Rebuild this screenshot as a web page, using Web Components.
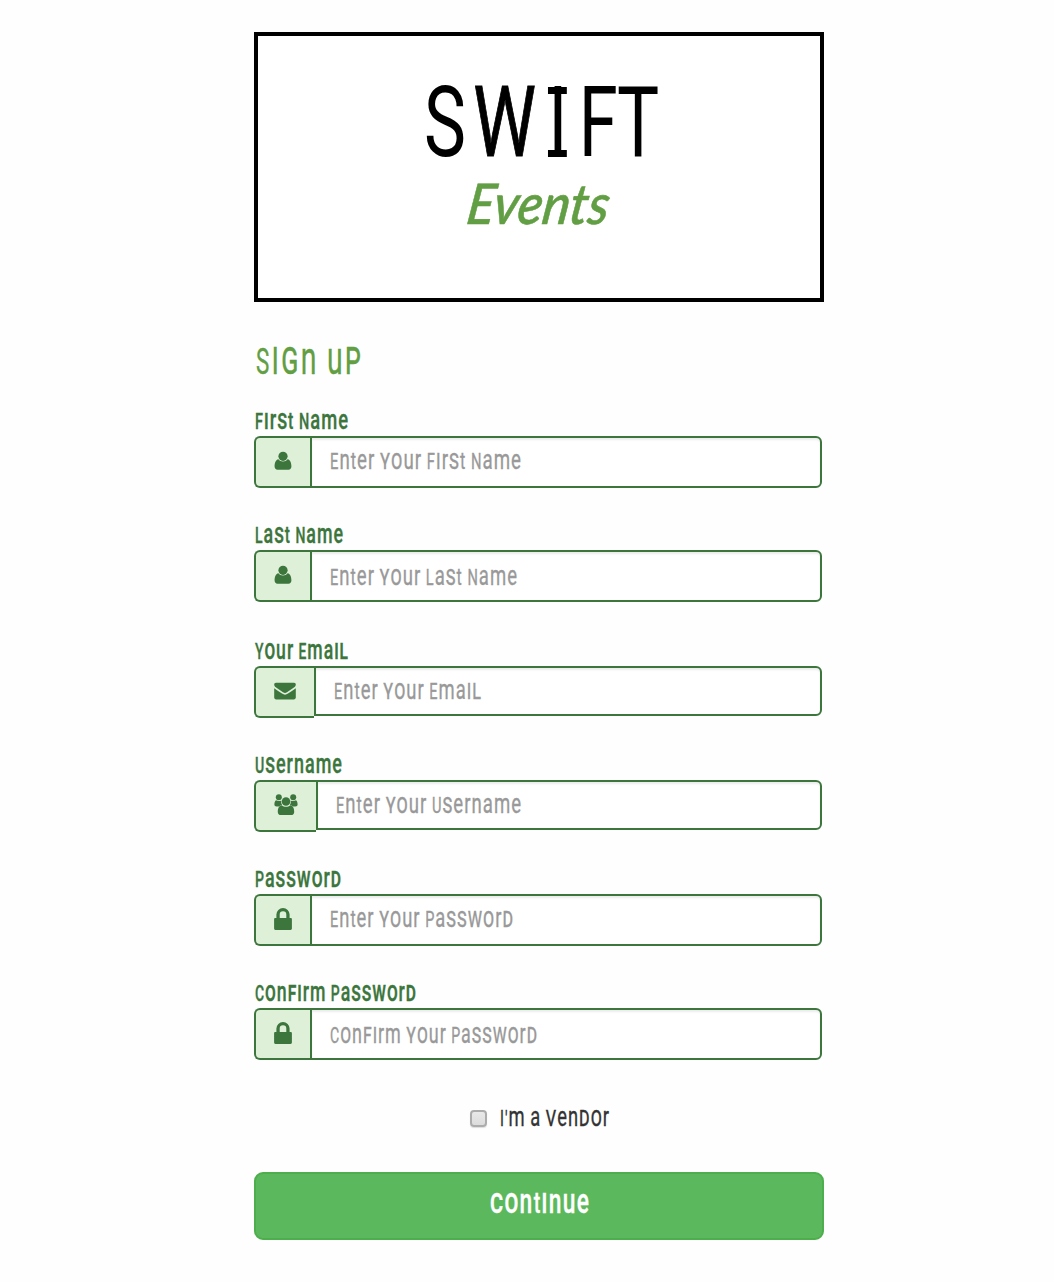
<!DOCTYPE html>
<html lang="en"><head><meta charset="utf-8"><title>Swift Events</title>
<style>
body{margin:0;background:#fefefe;font-family:Roboto,"Liberation Sans",sans-serif}
</style></head><body>
<signup-page></signup-page>
<script>
const define=(name,html,setup)=>customElements.define(name,class extends HTMLElement{
  connectedCallback(){
    if(this.shadowRoot)return;
    this.attachShadow({mode:'open'}).innerHTML=html(this);
    if(setup)setup(this,this.shadowRoot);
  }
});

// Condensed line of text, sized to the width in the "w" attribute.
// With "unicase", small letters are drawn at the height of the capitals.
define('fit-text',()=>`<style>
:host{display:inline-block;white-space:nowrap;text-align:left}
:host([unicase]) .t{-webkit-text-stroke:.35px currentColor}
.t{display:inline-block;transform-origin:0 50%}
.x{font-size:1.27em;line-height:0;font-weight:var(--small-weight,400)}
.c{font-size:1.3em;line-height:0;font-variant-caps:small-caps;font-weight:var(--small-weight,400)}
.k{font-size:1.1em;line-height:0}
</style><span class="t"></span>`,(el,root)=>{
  const s=root.querySelector('span');
  const text=el.getAttribute('text');
  if(el.hasAttribute('unicase'))
    s.innerHTML=text.replace(/([aemnru]+)|([bcdfgiklopsvwyz]+)|(t)/g,(m,x,c)=>`<span class="${x?'x':c?'c':'k'}">${m}</span>`);
  else s.textContent=text;
  const w=+el.getAttribute('w');
  const ls=parseFloat(getComputedStyle(s).letterSpacing)||0;
  const n=s.getBoundingClientRect().width-ls;
  el.style.width=w+'px';
  s.style.transform=`scaleX(${w/n})${el.hasAttribute('slant')?' skewX(-9deg)':''}`;
});

// Wordmark with a slab-serif I.
define('word-mark',()=>`<style>
:host{display:block;width:236px;height:98px;margin-left:5px;font-size:97.500px;line-height:99px;letter-spacing:4px;color:#000;white-space:nowrap}
.t{display:inline-block;transform-origin:0 50%;transform:scaleX(.725)}
.w{margin-left:6px;-webkit-text-stroke:1px #000}
.i{display:inline-block;height:98px;width:26px;letter-spacing:0;margin:0 16px 0 13px;
 background:linear-gradient(#000,#000) 0 13px/100% 7px no-repeat,linear-gradient(#000,#000) 0 76px/100% 7px no-repeat}
.f{margin-right:-5px}
</style><span class="t">S<span class="w">W</span><span class="i">I</span><span class="f">F</span>T</span>`);

const icons={
  user:'<svg width="18" height="20" viewBox="0 0 18 20"><circle cx="9" cy="5.300" r="4.600"/><path d="M4.400 8.300C1.400 8.900.6 12.400.6 15.600c0 2 1.200 3.200 2.900 3.200h11c1.700 0 2.900-1.200 2.900-3.200 0-3.200-.8-6.700-3.800-7.300-1.200 1.500-2.600 2.200-4.600 2.200s-3.400-.7-4.600-2.200z"/></svg>',
  mail:'<svg width="22" height="18" viewBox="0 0 22 18"><path d="M2 .8h18c1.200 0 1.800.8 1.800 1.800 0 1.200-.8 2.300-1.900 3L13 10.300c-1.400 1-2.600 1-4 0L2.100 5.600C1 4.900.2 3.800.2 2.600.2 1.600.9.8 2 .8z"/><path d="M.2 6.200c2.600 1.900 5.200 3.600 7.800 5.400 2.100 1.500 3.900 1.500 6 0 2.600-1.800 5.200-3.500 7.800-5.400v9.400c0 1.100-.8 1.900-1.900 1.900H2.100c-1.100 0-1.900-.8-1.900-1.900z"/></svg>',
  users:'<svg width="24" height="22" viewBox="0 0 24 22"><circle cx="4.800" cy="3.200" r="3"/><circle cx="19.200" cy="3.200" r="3"/><path d="M2 6.200c1.700 1 3.600 1.100 5.300.3-.4 1.700-.1 3.100.9 4.500-1.300.1-2.300.6-3.200 1.500H2.600C1.200 12.500.4 11.800.4 10.500c0-1.700.4-3.600 1.600-4.300zM22 6.200c-1.700 1-3.600 1.100-5.300.3.400 1.700.1 3.100-.9 4.500 1.300.1 2.300.6 3.200 1.500h2.400c1.400 0 2.200-.7 2.200-2 0-1.700-.4-3.600-1.600-4.300z"/><circle cx="12" cy="7.500" r="4.300"/><path d="M7.700 11.300c2.500 2 6.100 2 8.600 0 2.900.4 3.900 3.500 3.900 6.600 0 2-1.200 3.200-3.100 3.200H6.900c-1.900 0-3.100-1.200-3.100-3.200 0-3.100 1-6.200 3.900-6.600z"/></svg>',
  lock:'<svg width="18" height="22" viewBox="0 0 18 22"><path fill-rule="evenodd" d="M2.400 10V6.600a6.600 6.600 0 0 1 13.200 0V10h1c.8 0 1.300.5 1.300 1.300v9.300c0 .8-.5 1.300-1.300 1.300H1.400c-.8 0-1.300-.5-1.300-1.300v-9.300c0-.8.5-1.300 1.300-1.300zm3.300 0h6.600V6.600a3.300 3.300 0 0 0-6.600 0z"/></svg>'
};

define('brand-logo',()=>`<style>
:host{display:flex;flex-direction:column;align-items:center;box-sizing:border-box;width:570px;height:270px;border:4px solid #000;background:#fff;padding-top:38px}
.sub{font:italic 500 56px/64px Lato,sans-serif;color:#629e43;margin-top:-1px;-webkit-text-stroke:.6px #629e43}
</style><word-mark></word-mark><fit-text class="sub" slant text="Events" w="142"></fit-text>`);

define('form-field',el=>`<style>
:host{display:block;height:78px;color:#3c763d;font-size:21.500px;line-height:24px;letter-spacing:1.500px}
.label{box-sizing:border-box;height:26px;padding-top:1px;line-height:22px;font-weight:500;--small-weight:500}
.label fit-text{margin-left:1px}
.group{display:flex;align-items:flex-start;width:568px}
.addon{box-sizing:border-box;height:52px;width:${el.getAttribute('aw')||56}px;border:2px solid #3c763d;border-right:0;border-radius:6px 0 0 6px;background:#dff0d8;padding:${el.getAttribute('it')||13}px 0 0 18px;flex:none}
svg{display:block;fill:#3c763d}
.input{box-sizing:border-box;flex:1;height:${el.getAttribute('h')||52}px;border:2px solid #3c763d;border-radius:0 6px 6px 0;background:#fff;box-shadow:inset 0 2px 2px rgba(0,0,0,.075);color:#999;padding:${el.getAttribute('pt')}px 0 0 18px}
</style><div class="label"><fit-text unicase text="${el.getAttribute('label')}" w="${el.getAttribute('lw')}"></fit-text></div>
<div class="group"><div class="addon">${icons[el.getAttribute('icon')]}</div><div class="input"><fit-text unicase text="${el.getAttribute('hint')}" w="${el.getAttribute('hw')}"></fit-text></div></div>`);

define('vendor-check',()=>`<style>
:host{display:flex;align-items:center;gap:13px;height:24px;color:#333;font-size:21.500px;line-height:24px;letter-spacing:1.500px}
i{box-sizing:border-box;width:17px;height:17px;border:2px solid #acacac;border-radius:4px;background:linear-gradient(#e9e9e9,#dcdcdc);box-shadow:0 1px 1px #ddd}
fit-text{padding-top:2px}
</style><i></i><fit-text unicase text="I'm a vendor" w="109"></fit-text>`);

define('submit-button',()=>`<style>
:host{display:flex;justify-content:center;box-sizing:border-box;width:570px;height:68px;background:#5cb85c;border:2px solid #4cae4c;border-radius:9px;color:#fff;font-size:27px;font-weight:500;line-height:32px;letter-spacing:2px;--small-weight:500;padding-top:14px}
</style><fit-text unicase text="continue" w="99"></fit-text>`);

define('signup-page',()=>`<style>
:host{display:block;box-sizing:border-box;height:1282px;padding:32px 0 0 254px;overflow:hidden}
main{display:flex;flex-direction:column;width:570px}
h1{margin:39px 0 29px 2px;height:40px;font-size:36px;line-height:42px;font-weight:400;color:#629e43;letter-spacing:4px}
.fields{display:flex;flex-direction:column;gap:36px}
.mail{margin-top:2px}
vendor-check{margin:46px 0 42px 216px}
</style><main><brand-logo></brand-logo>
<h1><fit-text unicase text="Sign up" w="105"></fit-text></h1>
<div class="fields">
<form-field label="First Name" lw="93" icon="user" hint="Enter your First Name" hw="191" pt="12"></form-field>
<form-field label="Last Name" lw="88" icon="user" hint="Enter your Last Name" hw="187" pt="14"></form-field>
<form-field class="mail" label="Your Email" lw="93" icon="mail" aw="60" it="14" h="50" hint="Enter your Email" hw="147" pt="12"></form-field>
<form-field label="Username" lw="87" icon="users" aw="62" it="12" h="50" hint="Enter your Username" hw="185" pt="12"></form-field>
<form-field label="Password" lw="86" icon="lock" it="12" hint="Enter your Password" hw="183" pt="12"></form-field>
<form-field label="Confirm Password" lw="161" icon="lock" it="12" hint="Confirm your Password" hw="207" pt="14"></form-field>
</div>
<vendor-check></vendor-check><submit-button></submit-button></main>`);
</script></body></html>
